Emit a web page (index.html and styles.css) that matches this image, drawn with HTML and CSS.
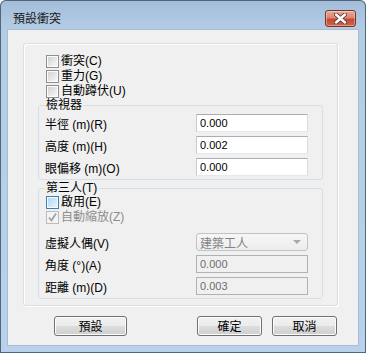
FILE: index.html
```html
<!DOCTYPE html>
<html lang="zh-Hant">

<head>
  <meta charset="UTF-8" />
  <meta name="viewport" content="width=device-width, initial-scale=1.0" />
  <title>預設衝突</title>
  <link rel="stylesheet" href="styles.css">
</head>

<body>
  <div class="window">
    <div class="titlebar">
      <span class="title">預設衝突</span>
      <button class="close" type="button">
        <svg width="13" height="11" viewBox="0 0 13 11">
          <path d="M2 1.5 L11 9.5 M11 1.5 L2 9.5" stroke="#5a3a33" stroke-width="4.2" stroke-linecap="round" fill="none" />
          <path d="M2 1.5 L11 9.5 M11 1.5 L2 9.5" stroke="#ffffff" stroke-width="2.4" stroke-linecap="round" fill="none" />
        </svg>
      </button>
    </div>

    <div class="client">
      <div class="panel">
        <label class="check-row"><span class="box"></span>衝突(C)</label>
        <label class="check-row"><span class="box"></span>重力(G)</label>
        <label class="check-row"><span class="box"></span>自動蹲伏(U)</label>

        <fieldset class="group">
          <legend>檢視器</legend>
          <div class="field"><span>半徑 (m)(R)</span><input class="text" type="text" value="0.000" /></div>
          <div class="field"><span>高度 (m)(H)</span><input class="text" type="text" value="0.002" /></div>
          <div class="field"><span>眼偏移 (m)(O)</span><input class="text" type="text" value="0.000" /></div>
        </fieldset>

        <fieldset class="group third">
          <legend>第三人(T)</legend>
          <label class="check-row"><span class="box hot"></span>啟用(E)</label>
          <label class="check-row disabled">
            <span class="box">
              <svg width="11" height="11" viewBox="0 0 11 11">
                <path d="M2 5.5 L4.5 8.5 L9 1.5" stroke="#a2a2a2" stroke-width="1.8" fill="none" />
              </svg>
            </span>自動縮放(Z)
          </label>
          <div class="field first"><span>虛擬人偶(V)</span>
            <div class="combo">建築工人<span class="arrow"></span></div>
          </div>
          <div class="field"><span>角度 (°)(A)</span><input class="text" type="text" value="0.000" disabled /></div>
          <div class="field"><span>距離 (m)(D)</span><input class="text" type="text" value="0.003" disabled /></div>
        </fieldset>
      </div>

      <div class="buttons">
        <button class="button wide" type="button">預設</button>
        <button class="button push" type="button">確定</button>
        <button class="button" type="button">取消</button>
      </div>
    </div>
  </div>
</body>

</html>
```

FILE: styles.css
```css
body {
  margin: 0;
  font-family: "Liberation Sans", "Noto Sans CJK TC", sans-serif;
  font-size: 12px;
  color: #000;
  background: #ffffff;
}

.window {
  width: 366px;
  height: 353px;
  box-sizing: border-box;
  padding: 0 8px 8px 8px;
  border-radius: 6px 6px 0 0;
  background: linear-gradient(to bottom, #a3bdd9 0, #b5cce5 30px, #b9d1ea 100%);
  box-shadow: inset 0 0 0 1px #50667d;
}

.titlebar {
  height: 30px;
  display: flex;
  justify-content: space-between;
  align-items: flex-start;
}

.title {
  margin: 10px 0 0 5px;
  line-height: 16px;
  font-family: "Noto Sans CJK TC", sans-serif;
  font-size: 12px;
  color: #1a1a1a;
}

.close {
  width: 31px;
  height: 17px;
  margin: 10px 2px 0 0;
  padding: 0;
  display: flex;
  align-items: center;
  justify-content: center;
  border: 1px solid #7a3226;
  border-radius: 3px;
  background: linear-gradient(to bottom, #e9a99b 0%, #d98672 45%, #c24a30 55%, #d0644a 100%);
  box-shadow: inset 0 0 0 1px rgba(255, 255, 255, 0.35);
}

.client {
  height: 315px;
  background: #f0f0f0;
  box-shadow: 0 0 0 1px #a9bdd2;
  overflow: hidden;
}

.panel {
  margin: 13px 20px 0 15px;
  padding: 10px 14px 6px 14px;
  border: 1px solid #d5dfe5;
  border-radius: 3px;
  box-shadow: inset 1px 1px 0 #ffffff, 1px 1px 0 #ffffff;
}

.check-row {
  display: flex;
  align-items: center;
  height: 15px;
  line-height: 15px;
  margin-left: 8px;
}

.box {
  width: 13px;
  height: 13px;
  box-sizing: border-box;
  margin-right: 2px;
  padding: 1px;
  display: flex;
  align-items: center;
  justify-content: center;
  border: 1px solid #8e8f8f;
  background: linear-gradient(135deg, #d2d2d2, #f8f8f8) content-box, #fbfbfb;
}

.box.hot {
  border-color: #3c7fb1;
  background: linear-gradient(135deg, #b1d7f2, #e8f5fd) content-box, #f4fafe;
}

.disabled {
  color: #8d8d8d;
}

.disabled .box {
  border-color: #bcbcbc;
  padding: 0;
  background: #f4f4f4;
}

.group {
  margin: 0;
  padding: 0 14px 1px 6px;
  border: 1px solid #d5dfe5;
  border-radius: 3px;
}

.group legend {
  padding: 0 1px;
  line-height: 13px;
}

.group.third {
  margin-top: 2px;
}

.group.third .check-row {
  margin-left: 1px;
}

.field {
  height: 22px;
  display: flex;
  align-items: center;
  justify-content: space-between;
}

.field.first {
  margin-top: 6px;
}

.text {
  width: 112px;
  height: 18px;
  box-sizing: border-box;
  margin: 0;
  padding: 0 3px;
  font-family: "Liberation Sans", sans-serif;
  font-size: 11px;
  color: #000;
  background: #ffffff;
  border: 1px solid;
  border-color: #abadb3 #d9dde3 #e3e9ef #c8ccd2;
  outline: none;
}

.text:disabled {
  color: #6d6d6d;
  background: #f0f0f0;
  border-color: #adb2b5;
}

.combo {
  width: 112px;
  height: 18px;
  box-sizing: border-box;
  padding: 0 3px;
  display: flex;
  align-items: center;
  justify-content: space-between;
  color: #838383;
  border: 1px solid #c2c2c2;
  border-radius: 3px;
  background: linear-gradient(to bottom, #f6f6f6, #ededed);
}

.arrow {
  width: 0;
  height: 0;
  margin-right: 3px;
  border-left: 4px solid transparent;
  border-right: 4px solid transparent;
  border-top: 4px solid #a9a9a9;
}

.buttons {
  display: flex;
  margin-top: 10px;
  padding: 0 21px 0 46px;
}

.button {
  width: 65px;
  height: 20px;
  padding: 0;
  font-family: "Noto Sans CJK TC", sans-serif;
  font-size: 12px;
  line-height: 16px;
  color: #000;
  border: 1px solid #707070;
  border-radius: 3px;
  background: linear-gradient(to bottom, #f2f2f2 0%, #ebebeb 50%, #dddddd 50%, #cfcfcf 100%);
  box-shadow: inset 0 0 0 1px #fcfcfc;
}

.button.wide {
  width: 73px;
}

.button.push {
  margin-left: auto;
  margin-right: 10px;
}
```
